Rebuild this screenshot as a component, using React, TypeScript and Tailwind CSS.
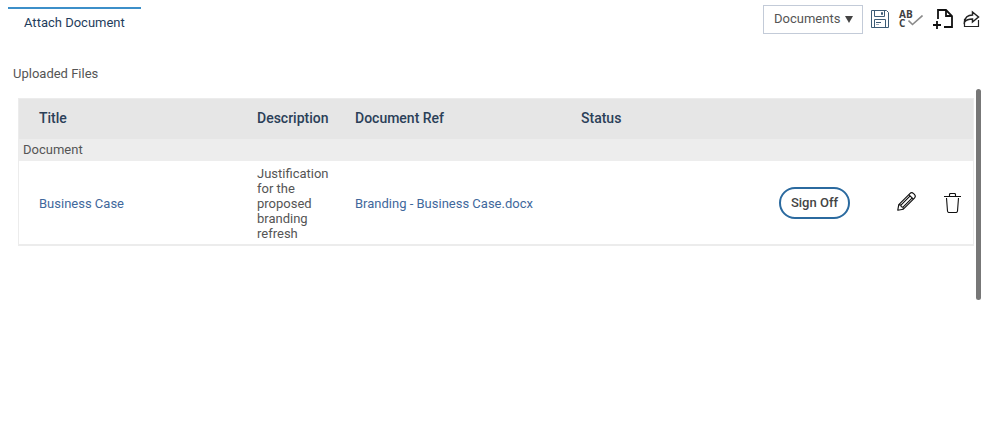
import { useState } from "react";

interface UploadedFile {
  id: number;
  title: string;
  description: string;
  documentRef: string;
  status: string;
}

const FILES: UploadedFile[] = [
  {
    id: 1,
    title: "Business Case",
    description: "Justification for the proposed branding refresh",
    documentRef: "Branding - Business Case.docx",
    status: "",
  },
];

function SaveIcon() {
  return (
    <svg width="18" height="18" viewBox="0 0 18 18" fill="none" stroke="#3d5c76" aria-hidden="true">
      <path d="M.5.5h15l2 2v15H.5z" />
      <path d="M3.5.5v6h10v-6M10.5 2.500v2h1v-2z" />
      <path d="M3.500 17.500v-8h11v8M5 12.500h5" />
      <path d="M5 14.500h3" strokeOpacity=".5" />
    </svg>
  );
}

function CheckIcon() {
  return (
    <svg width="15" height="11" viewBox="0 0 15 11" fill="none" stroke="#8a8a8a" strokeWidth="1.600" aria-hidden="true">
      <path d="M.5 5.500l4 4L14.500.5" />
    </svg>
  );
}

function AddDocumentIcon() {
  return (
    <svg width="20" height="20" viewBox="0 0 20 20" fill="none" stroke="#111" strokeWidth="1.800" aria-hidden="true">
      <path d="M5 10V1h8l6 6v11h-8" />
      <path d="M13 1v6h6" />
      <path d="M0 16h8M4 12v8" />
    </svg>
  );
}

function ShareIcon() {
  return (
    <svg width="17" height="18" viewBox="0 0 17 18" fill="none" stroke="#222" aria-hidden="true">
      <path d="M1.500 9v7.500h14V10" strokeWidth="1.200" />
      <path d="M1.500 12C2 7.500 5 5 9.500 5V2l6 5-6 5V9C6 9 3.500 9.500 1.500 12z" strokeWidth="1.500" />
    </svg>
  );
}

function PencilIcon() {
  return (
    <svg
      width="19"
      height="19"
      viewBox="0 0 18 18"
      fill="none"
      stroke="#111"
      strokeWidth="1.100"
      strokeLinejoin="round"
      aria-hidden="true"
    >
      <path d="M.7 17.300l1-5.300L12.200 1.500c1-1 2.400-1 3.500 0l.8.800c1 1.100 1 2.500 0 3.500L6 16.300z" />
      <path d="M1.700 12l2 .400.400 1.600 1.600.400.300 1.900M3.700 12.400l9-9M5.700 14.400l9-9M11.200 2.500l4.300 4.300" />
    </svg>
  );
}

function TrashIcon() {
  return (
    <svg width="17" height="20" viewBox="0 0 17 20" fill="none" stroke="#111" strokeWidth="1.100" aria-hidden="true">
      <path d="M0 3.500h17M5.500 3.500v-2q0-1 1-1h4q1 0 1 1v2" />
      <path d="M2.500 5l1 13q.1 1.500 1.500 1.500h7q1.400 0 1.500-1.500l1-13" />
    </svg>
  );
}

export default function App() {
  const [files, setFiles] = useState<UploadedFile[]>(FILES);
  const [view, setView] = useState("Documents");

  function removeFile(id: number) {
    setFiles((current) => current.filter((file) => file.id !== id));
  }

  return (
    <div className="min-h-screen bg-white font-[Roboto,sans-serif] text-[13px] leading-[15px] text-[#555]">
      {/* Tab and toolbar */}
      <header className="flex items-start justify-between pt-[5px] pr-3.5 pl-2">
        <button type="button" className="mt-0.5 border-t-2 border-[#3c8fc9] px-4 pt-1.5 text-[#1f3d5c]">
          Attach Document
        </button>

        <div className="flex items-center gap-2">
          <div className="relative">
            <select
              aria-label="View"
              value={view}
              onChange={(e) => setView(e.target.value)}
              className="block h-[29px] w-[100px] appearance-none border border-[#c3cbd8] bg-white px-2.5 pb-0.5"
            >
              <option>Documents</option>
              <option>Templates</option>
            </select>
            <svg
              width="8"
              height="7"
              viewBox="0 0 8 7"
              className="pointer-events-none absolute top-[11px] right-2.5 fill-[#444]"
              aria-hidden="true"
            >
              <path d="M0 0h8L4 7z" />
            </svg>
          </div>
          <div className="flex items-center gap-2.5 pb-0.5">
            <button type="button" aria-label="Save">
              <SaveIcon />
            </button>
            <button
              type="button"
              aria-label="Check spelling"
              className="relative w-6 pr-2 text-left font-['Open_Sans',sans-serif] text-[10px] leading-[9px] font-bold text-[#404040]"
            >
              AB C
              <span className="absolute right-0 bottom-0.5">
                <CheckIcon />
              </span>
            </button>
            <button type="button" aria-label="Add document">
              <AddDocumentIcon />
            </button>
            <button type="button" aria-label="Share">
              <ShareIcon />
            </button>
          </div>
        </div>
      </header>

      <main className="pt-8 pr-[13px]">
        <h2 className="pl-[13px]">Uploaded Files</h2>

        <div className="mt-2 flex items-start gap-0.5">
          <div className="min-w-0 flex-1 pt-[9px] pl-[18px]">
            <table className="w-full table-fixed border-separate border-spacing-0 border border-b-2 border-[#ececec] text-left">
              <colgroup>
                <col className="w-[234px]" />
                <col className="w-[98px]" />
                <col className="w-[226px]" />
                <col />
                <col className="w-[118px]" />
                <col className="w-[47px]" />
                <col className="w-[33px]" />
              </colgroup>
              <thead className="h-10 bg-[#e6e6e6] text-sm text-[#2b4058]">
                <tr>
                  <th className="pb-0.5 pl-5 font-medium">Title</th>
                  <th className="px-1 pb-0.5 font-medium">Description</th>
                  <th className="px-1 pb-0.5 font-medium">Document Ref</th>
                  <th className="px-1 pb-0.5 font-medium">Status</th>
                  <td colSpan={3} />
                </tr>
              </thead>
              <tbody>
                <tr className="h-[22px] bg-[#ededed]">
                  <td colSpan={7} className="px-1 pb-0.5">
                    Document
                  </td>
                </tr>
                {files.map((file) => (
                  <tr key={file.id}>
                    <td className="pt-0.5 pl-5">
                      <a href="#title" className="text-[#3f689c]">
                        {file.title}
                      </a>
                    </td>
                    <td className="px-1 pt-[5px] pb-[3px]">{file.description}</td>
                    <td className="px-1 pt-0.5">
                      <a href="#document" className="text-[#3f689c]">
                        {file.documentRef}
                      </a>
                    </td>
                    <td className="px-1 pt-0.5">{file.status}</td>
                    <td className="px-1">
                      <button
                        type="button"
                        className="block h-8 w-[71px] rounded-2xl border-2 border-[#2b6a9f] font-medium text-[#444]"
                      >
                        Sign Off
                      </button>
                    </td>
                    <td className="px-1 pb-0.5">
                      <button type="button" aria-label="Edit" className="block">
                        <PencilIcon />
                      </button>
                    </td>
                    <td className="px-1">
                      <button type="button" aria-label="Delete" className="block" onClick={() => removeFile(file.id)}>
                        <TrashIcon />
                      </button>
                    </td>
                  </tr>
                ))}
              </tbody>
            </table>
          </div>

          {/* Scroll thumb */}
          <div className="h-[211px] w-[5px] rounded-full bg-[#777]" />
        </div>
      </main>
    </div>
  );
}
